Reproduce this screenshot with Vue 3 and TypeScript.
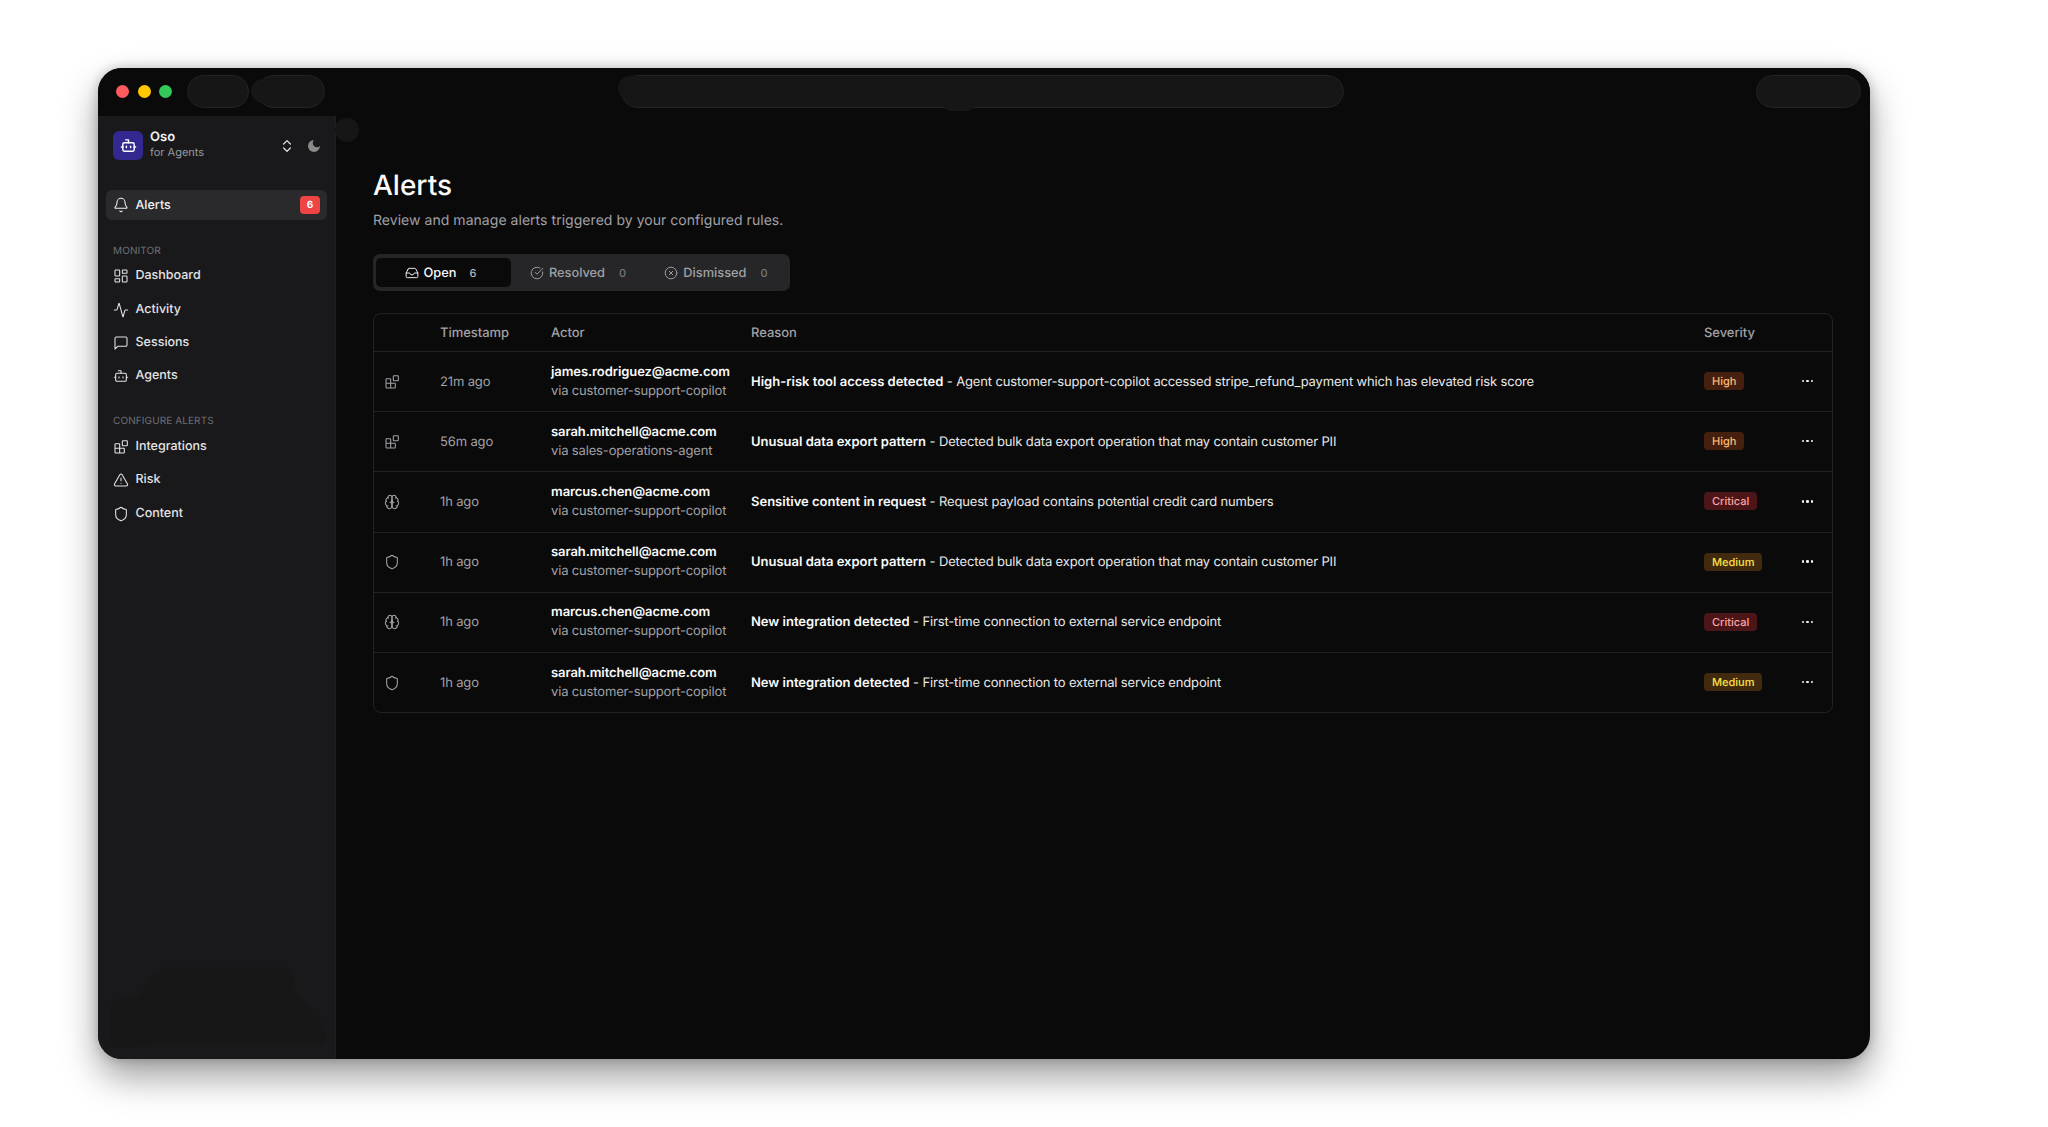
<script setup lang="ts">
import { h } from 'vue'

const icons: Record<string, string[]> = {
  bell: ['M10.268 21a2 2 0 0 0 3.464 0', 'M3.262 15.326A1 1 0 0 0 4 17h16a1 1 0 0 0 .74-1.673C19.41 13.956 18 12.499 18 8A6 6 0 0 0 6 8c0 4.499-1.411 5.956-2.738 7.326'],
  dashboard: ['M4 3h5a1 1 0 0 1 1 1v7a1 1 0 0 1-1 1H4a1 1 0 0 1-1-1V4a1 1 0 0 1 1-1z', 'M15 3h5a1 1 0 0 1 1 1v3a1 1 0 0 1-1 1h-5a1 1 0 0 1-1-1V4a1 1 0 0 1 1-1z', 'M15 12h5a1 1 0 0 1 1 1v7a1 1 0 0 1-1 1h-5a1 1 0 0 1-1-1v-7a1 1 0 0 1 1-1z', 'M4 16h5a1 1 0 0 1 1 1v3a1 1 0 0 1-1 1H4a1 1 0 0 1-1-1v-3a1 1 0 0 1 1-1z'],
  activity: ['M22 12h-2.48a2 2 0 0 0-1.93 1.46l-2.35 8.36a.25.25 0 0 1-.48 0L9.24 2.18a.25.25 0 0 0-.48 0l-2.35 8.36A2 2 0 0 1 4.49 12H2'],
  message: ['M21 15a2 2 0 0 1-2 2H7l-4 4V5a2 2 0 0 1 2-2h14a2 2 0 0 1 2 2z'],
  bot: ['M12 8V4H8', 'M6 8h12a2 2 0 0 1 2 2v8a2 2 0 0 1-2 2H6a2 2 0 0 1-2-2v-8a2 2 0 0 1 2-2z', 'M2 14h2', 'M20 14h2', 'M15 13v2', 'M9 13v2'],
  blocks: ['M15 2.5h5.5a1 1 0 0 1 1 1V9a1 1 0 0 1-1 1H15a1 1 0 0 1-1-1V3.5a1 1 0 0 1 1-1z', 'M10 21V8a1 1 0 0 0-1-1H4a1 1 0 0 0-1 1v12a1 1 0 0 0 1 1h12a1 1 0 0 0 1-1v-5a1 1 0 0 0-1-1H3'],
  triangle: ['m21.73 18-8-14a2 2 0 0 0-3.48 0l-8 14A2 2 0 0 0 4 21h16a2 2 0 0 0 1.73-3', 'M12 9v4', 'M12 17h.01'],
  shield: ['M20 13c0 5-3.5 7.5-7.66 8.95a1 1 0 0 1-.67-.01C7.5 20.5 4 18 4 13V6a1 1 0 0 1 1-1c2 0 4.5-1.2 6.24-2.72a1.17 1.17 0 0 1 1.52 0C14.51 3.81 17 5 19 5a1 1 0 0 1 1 1z'],
  brain: ['M12 5a3 3 0 1 0-5.997.125 4 4 0 0 0-2.526 5.77 4 4 0 0 0 .556 6.588A4 4 0 1 0 12 18Z', 'M12 5a3 3 0 1 1 5.997.125 4 4 0 0 1 2.526 5.77 4 4 0 0 1-.556 6.588A4 4 0 1 1 12 18Z', 'M15 13a4.5 4.5 0 0 1-3-4 4.5 4.5 0 0 1-3 4', 'M12 18V9', 'M17.599 6.5a3 3 0 0 0 .399-1.375', 'M6.003 5.125A3 3 0 0 0 6.401 6.5', 'M3.477 10.896a4 4 0 0 1 .585-.396', 'M19.938 10.5a4 4 0 0 1 .585.396', 'M6 18a4 4 0 0 1-1.967-.516', 'M19.967 17.484A4 4 0 0 1 18 18'],
  inbox: ['M22 12h-6l-2 3h-4l-2-3H2', 'M5.45 5.11 2 12v6a2 2 0 0 0 2 2h16a2 2 0 0 0 2-2v-6l-3.45-6.89A2 2 0 0 0 16.76 4H7.24a2 2 0 0 0-1.79 1.11z'],
  check: ['M21.801 10A10 10 0 1 1 17 3.335', 'm9 11 3 3L22 4'],
  x: ['M22 12a10 10 0 1 1-20 0 10 10 0 1 1 20 0z', 'm15 9-6 6', 'm9 9 6 6'],
  updown: ['m7 15 5 5 5-5', 'm7 9 5-5 5 5'],
}

const Icon = (props: { name: string; size?: number; sw?: number }) =>
  h(
    'svg',
    {
      width: props.size ?? 16,
      height: props.size ?? 16,
      viewBox: '0 0 24 24',
      fill: 'none',
      stroke: 'currentColor',
      'stroke-width': props.sw ?? 1.6,
      'stroke-linecap': 'round',
      'stroke-linejoin': 'round',
      style: 'flex:none;display:block',
    },
    icons[props.name].map((d) => h('path', { d })),
  )
Icon.props = ['name', 'size', 'sw']

const monitor = [
  { icon: 'dashboard', label: 'Dashboard' },
  { icon: 'activity', label: 'Activity' },
  { icon: 'message', label: 'Sessions' },
  { icon: 'bot', label: 'Agents' },
]
const configure = [
  { icon: 'blocks', label: 'Integrations' },
  { icon: 'triangle', label: 'Risk' },
  { icon: 'shield', label: 'Content' },
]
const tabs = [
  { icon: 'inbox', label: 'Open', count: 6, active: true },
  { icon: 'check', label: 'Resolved', count: 0, active: false },
  { icon: 'x', label: 'Dismissed', count: 0, active: false },
]
const exportText = 'Detected bulk data export operation that may contain customer PII'
const newText = 'First-time connection to external service endpoint'
const rows = [
  { icon: 'blocks', time: '21m ago', actor: 'james.rodriguez@acme.com', via: 'via customer-support-copilot', title: 'High-risk tool access detected', text: 'Agent customer-support-copilot accessed stripe_refund_payment which has elevated risk score', sev: 'High' },
  { icon: 'blocks', time: '56m ago', actor: 'sarah.mitchell@acme.com', via: 'via sales-operations-agent', title: 'Unusual data export pattern', text: exportText, sev: 'High' },
  { icon: 'brain', time: '1h ago', actor: 'marcus.chen@acme.com', via: 'via customer-support-copilot', title: 'Sensitive content in request', text: 'Request payload contains potential credit card numbers', sev: 'Critical' },
  { icon: 'shield', time: '1h ago', actor: 'sarah.mitchell@acme.com', via: 'via customer-support-copilot', title: 'Unusual data export pattern', text: exportText, sev: 'Medium' },
  { icon: 'brain', time: '1h ago', actor: 'marcus.chen@acme.com', via: 'via customer-support-copilot', title: 'New integration detected', text: newText, sev: 'Critical' },
  { icon: 'shield', time: '1h ago', actor: 'sarah.mitchell@acme.com', via: 'via customer-support-copilot', title: 'New integration detected', text: newText, sev: 'Medium' },
]
</script>

<template>
  <div class="page">
    <div class="window">
      <header class="titlebar">
        <div class="lights">
          <span class="light red"></span>
          <span class="light yellow"></span>
          <span class="light green"></span>
        </div>
        <span class="pill pill-a"></span>
        <span class="pill pill-b"></span>
        <span class="pill pill-c"></span>
        <span class="pill pill-d"></span>
      </header>
      <div class="body">
        <aside class="sidebar">
          <div class="brand">
            <span class="logo"><Icon name="bot" :size="17" :sw="2" /></span>
            <div class="brand-text">
              <div class="brand-name">Oso</div>
              <div class="brand-sub">for Agents</div>
            </div>
            <span class="updown"><Icon name="updown" :size="16" :sw="1.8" /></span>
            <svg class="moon" width="16" height="16" viewBox="0 0 24 24" fill="#8a8a8a"><path d="M12 3a6 6 0 0 0 9 9 9 9 0 1 1-9-9Z" /></svg>
          </div>
          <div class="nav-active">
            <Icon name="bell" />
            <span class="nav-label">Alerts</span>
            <span class="badge">6</span>
          </div>
          <div class="section">MONITOR</div>
          <div v-for="n in monitor" :key="n.label" class="nav">
            <Icon :name="n.icon" />
            <span class="nav-label">{{ n.label }}</span>
          </div>
          <div class="section second">CONFIGURE ALERTS</div>
          <div v-for="n in configure" :key="n.label" class="nav">
            <Icon :name="n.icon" />
            <span class="nav-label">{{ n.label }}</span>
          </div>
          <svg class="sidebar-blob" width="216" height="80" viewBox="0 0 216 80">
            <path d="M6 80 Q0 80 0 72 V44 Q0 34 10 32 L30 29 Q38 10 46 5 Q52 0 62 0 H172 Q184 0 184 12 V22 L208 52 Q216 62 216 70 Q216 78 204 78 H40 Q30 78 24 80 Z" fill="#171718" />
          </svg>
        </aside>
        <main class="main">
          <span class="main-dot"></span>
          <h1 class="title">Alerts</h1>
          <p class="subtitle">Review and manage alerts triggered by your configured rules.</p>
          <div class="tabs">
            <div v-for="t in tabs" :key="t.label" class="tab" :class="{ active: t.active }">
              <Icon :name="t.icon" :size="14" />
              <span class="tab-label">{{ t.label }}</span>
              <span class="tab-count">{{ t.count }}</span>
            </div>
          </div>
          <div class="table">
            <div class="row head">
              <span></span>
              <span>Timestamp</span>
              <span>Actor</span>
              <span>Reason</span>
              <span>Severity</span>
              <span></span>
            </div>
            <div v-for="(r, i) in rows" :key="i" class="row item">
              <span class="type"><Icon :name="r.icon" :size="16" /></span>
              <span class="time">{{ r.time }}</span>
              <div class="actor">
                <div class="email">{{ r.actor }}</div>
                <div class="via">{{ r.via }}</div>
              </div>
              <div class="reason"><strong>{{ r.title }}</strong> - {{ r.text }}</div>
              <div class="sev-cell"><span class="sev" :class="r.sev.toLowerCase()">{{ r.sev }}</span></div>
              <span class="dots"><i></i><i></i><i></i></span>
            </div>
          </div>
        </main>
      </div>
    </div>
  </div>
</template>

<style>
html, body { background: #fff; }
</style>

<style scoped>
.page {
  width: 2048px;
  height: 1127px;
  padding: 68px 178px 68px 98px;
  box-sizing: border-box;
  background: #fff;
  overflow: hidden;
  font-family: Inter, "Liberation Sans", sans-serif;
  font-size: 13px;
  text-rendering: geometricPrecision;
}
.window {
  height: 991px;
  border-radius: 24px;
  overflow: hidden;
  background: #0a0a0a;
  display: flex;
  flex-direction: column;
  box-shadow: 0 18px 36px rgba(0, 0, 0, 0.38), 0 0 12px rgba(0, 0, 0, 0.22);
}
.titlebar {
  height: 48px;
  flex: none;
  display: flex;
  align-items: center;
  padding-left: 18px;
  background: #0a0a0a;
}
.lights { display: flex; gap: 8.5px; width: 71px; margin-top: -1px; }
.light { width: 13px; height: 13px; border-radius: 50%; }
.red { background: #ff5a5f; }
.yellow { background: #ffc800; }
.green { background: #34c759; }
.pill {
  position: relative;
  height: 33px;
  box-sizing: border-box;
  border-radius: 17px;
  background: #161616;
  border: 1px solid #242424;
  margin-top: -1px;
}
.pill-a { width: 62px; }
.pill-b { width: 68px; margin-left: 8px; }
.pill-b::before {
  content: "";
  position: absolute;
  left: -7px;
  top: 3px;
  width: 30px;
  height: 24px;
  border-radius: 12px;
  background: #161616;
}
.pill-c { width: 723px; margin-left: 296px; }
.pill-c::before {
  content: "";
  position: absolute;
  left: -4px;
  top: 0;
  width: 36px;
  height: 24px;
  border-radius: 12px;
  background: #161616;
}
.pill-c::after {
  content: "";
  position: absolute;
  left: 320px;
  top: 26px;
  width: 34px;
  height: 9px;
  border-radius: 0 0 17px 17px;
  background: #161616;
}
.pill-d { width: 105px; margin-left: 412px; }

.body { flex: 1; display: flex; min-height: 0; }

.sidebar {
  position: relative;
  width: 238px;
  flex: none;
  box-sizing: border-box;
  background: #19191b;
  border-right: 1px solid #1f1f21;
  padding: 15px 8px 0;
  color: #e8e8e8;
}
.brand { display: flex; align-items: center; padding: 0 6px 0 7px; height: 29px; }
.logo {
  width: 30px;
  height: 29px;
  border-radius: 6px;
  background: #33288f;
  color: #fff;
  display: flex;
  align-items: center;
  justify-content: center;
  flex: none;
}
.brand-text { margin-left: 7px; flex: 1; }
.brand-name { font-size: 13px; font-weight: 600; line-height: 15px; color: #f4f4f4; margin-top: -1px; }
.brand-sub { font-size: 11px; line-height: 15px; color: #9a9a9e; }
.updown { color: #e8e8e8; margin-right: 11px; }
.moon { margin-right: -1px; }
.nav-active {
  margin-top: 30px;
  height: 30px;
  display: flex;
  align-items: center;
  gap: 7px;
  padding: 0 7px 0 6.5px;
  border-radius: 6px;
  background: #2a2a2d;
  font-size: 12.5px;
  font-weight: 500;
  color: #f2f2f2;
}
.nav-active .nav-label { flex: 1; padding-top: 1px; }
.badge {
  width: 20px;
  height: 18px;
  border-radius: 4px;
  background: #ef4444;
  color: #fff;
  font-size: 10px;
  font-weight: 700;
  display: flex;
  align-items: center;
  justify-content: center;
}
.section {
  margin-top: 23.5px;
  padding-left: 7px;
  font-size: 10px;
  line-height: 14px;
  color: #6f6f73;
  letter-spacing: 0.1px;
}
.section.second { margin-top: 21px; }
.nav {
  height: 33.4px;
  display: flex;
  align-items: center;
  gap: 7px;
  padding: 0 6.5px;
  font-size: 12.5px;
  font-weight: 500;
  color: #e4e4e6;
}
.section + .nav { margin-top: 2px; }
.nav-label { line-height: 16px; }
.sidebar-blob {
  position: absolute;
  left: 12px;
  bottom: 12px;
}

.main {
  position: relative;
  flex: 1;
  min-width: 0;
  padding: 52px 37px 0 37px;
  color: #f5f5f5;
}
.main-dot {
  position: absolute;
  left: -1px;
  top: 2px;
  width: 24px;
  height: 24px;
  border-radius: 50%;
  background: #161616;
}
.title {
  margin: 0;
  font-size: 28px;
  line-height: 34px;
  font-weight: 500;
  color: #fafafa;
}
.subtitle {
  margin: 9px 0 0;
  font-size: 14px;
  line-height: 20px;
  letter-spacing: 0.04px;
  color: #a1a1a6;
}
.tabs {
  margin-top: 23px;
  width: 417px;
  height: 37px;
  box-sizing: border-box;
  padding: 4px 3px;
  display: grid;
  grid-template-columns: 135px 135px 1fr;
  border-radius: 7px;
  background: #262628;
}
.tab {
  display: flex;
  align-items: center;
  justify-content: center;
  gap: 5px;
  height: 29px;
  box-sizing: border-box;
  padding-right: 1px;
  font-size: 12.8px;
  font-weight: 500;
  color: #a1a1a6;
  border-radius: 5px;
}
.tab.active { color: #fafafa; background: #0a0a0a; padding-right: 6px; }
.tab-label { padding-top: 1px; }
.tab-count { font-size: 11px; margin-left: 9px; color: #77777b; }
.tab.active .tab-count { color: #bdbdbd; margin-left: 8px; }

.table {
  margin-top: 22px;
  border: 1px solid #222;
  border-radius: 8px;
}
.row {
  display: grid;
  grid-template-columns: 66px 111px 200px 953px 86px 1fr;
  align-items: center;
}
.head { height: 37px; color: #a1a1a6; font-size: 13px; font-weight: 500; letter-spacing: -0.05px; }
.item { height: 60.2px; box-sizing: border-box; border-top: 1px solid #222; }
.type { padding-left: 10px; color: #a1a1a6; }
.time { color: #a1a1a6; letter-spacing: -0.15px; }
.email { font-weight: 600; line-height: 19px; color: #fafafa; letter-spacing: -0.08px; }
.via { line-height: 19px; color: #a1a1a6; letter-spacing: -0.15px; }
.reason { color: #e8e8e8; letter-spacing: -0.15px; }
.reason strong { font-weight: 600; color: #fafafa; letter-spacing: 0; }
.sev-cell { margin-top: -1px; }
.sev {
  display: inline-block;
  padding: 0 8px;
  height: 18px;
  line-height: 18px;
  border-radius: 4px;
  font-size: 11px;
  font-weight: 500;
}
.high { background: #45200f; color: #fdba74; }
.critical { background: #4c1518; color: #fca5a5; }
.medium { background: #422a0e; color: #fde047; }
.dots { display: flex; gap: 2px; padding-left: 12px; margin-top: -1px; }
.dots i { width: 2.4px; height: 2.4px; border-radius: 50%; background: #f5f5f5; }
</style>
